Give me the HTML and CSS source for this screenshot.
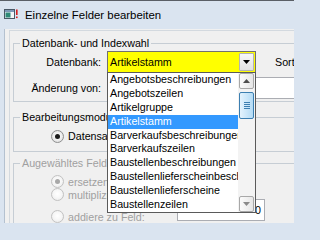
FILE: index.html
```html
<!DOCTYPE html>
<html lang="de">
<head>
<meta charset="utf-8">
<title>Einzelne Felder bearbeiten</title>
<link rel="stylesheet" href="styles.css">
</head>
<body>
<div class="win">
  <div class="titlebar">
    <svg class="appicon" width="14" height="11" viewBox="0 0 14 11">
      <rect x="0.5" y="0.5" width="10" height="9" fill="#f2f5f8" stroke="#4a5866"/>
      <rect x="1" y="1" width="9" height="2" fill="#7d98b6"/>
      <rect x="1.5" y="3.5" width="5" height="5" fill="#2f8a78"/>
      <rect x="12" y="0.5" width="1.6" height="5.5" fill="#d42020"/>
      <rect x="12" y="7.5" width="1.6" height="1.6" fill="#d42020"/>
    </svg>
    <span class="title">Einzelne Felder bearbeiten</span>
  </div>
  <div class="frame">
    <div class="client">
      <div class="panel">
        <fieldset class="grp g1">
          <legend>Datenbank- und Indexwahl</legend>
          <div class="frow">
            <span class="flabel">Datenbank:</span>
            <div class="combo">
              <span class="combo-text">Artikelstamm</span>
              <span class="combo-btn">
                <svg width="7" height="4" viewBox="0 0 7 4"><path d="M0 0H7L3.5 4Z" fill="#000"/></svg>
              </span>
              <div class="droplist">
                <ul class="items">
                  <li>Angebotsbeschreibungen</li>
                  <li>Angebotszeilen</li>
                  <li>Artikelgruppe</li>
                  <li class="sel">Artikelstamm</li>
                  <li>Barverkaufsbeschreibungen</li>
                  <li>Barverkaufszeilen</li>
                  <li>Baustellenbeschreibungen</li>
                  <li>Baustellenlieferscheinbeschreibungen</li>
                  <li>Baustellenlieferscheine</li>
                  <li>Baustellenzeilen</li>
                </ul>
                <div class="vscroll">
                  <span class="sbtn">
                    <svg width="7" height="4" viewBox="0 0 7 4"><path d="M0 4H7L3.5 0Z" fill="#4d4d4d"/></svg>
                  </span>
                  <span class="thumb"><span class="grip"></span></span>
                  <span class="track"></span>
                  <span class="sbtn">
                    <svg width="7" height="4" viewBox="0 0 7 4"><path d="M0 0H7L3.5 4Z" fill="#8a8a8a"/></svg>
                  </span>
                </div>
              </div>
            </div>
            <span class="sortlabel">Sortierung:</span>
          </div>
          <div class="frow r2">
            <span class="flabel">Änderung von:</span>
            <div class="textbox wide"></div>
          </div>
        </fieldset>

        <fieldset class="grp g2">
          <legend>Bearbeitungsmodus</legend>
          <div class="orow">
            <span class="opt"><span class="radio on"><span class="dot"></span></span>Datensatzweise</span>
            <span class="tail">bearbeiten:</span>
          </div>
        </fieldset>

        <fieldset class="grp g3 off">
          <legend>Augewähltes Feld</legend>
          <div class="orow">
            <span class="opt"><span class="radio on"><span class="dot"></span></span>ersetzen durch:</span>
          </div>
          <div class="orow">
            <span class="opt"><span class="radio"></span>multipliziere mit:</span>
          </div>
          <div class="orow tall">
            <span class="opt fixed"><span class="radio"></span>addiere zu Feld:</span>
            <div class="textbox num">0</div>
          </div>
        </fieldset>
      </div>
    </div>
  </div>
</div>
</body>
</html>
```
FILE: styles.css
```css
html, body {
  margin: 0;
  padding: 0;
}
body {
  width: 294px;
  height: 223px;
  overflow: hidden;
  background: #dae4f0;
  font-family: "Liberation Sans", Arial, sans-serif;
  font-size: 10.7px;
  color: #000;
}
.win {
  width: 294px;
  height: 223px;
  overflow: hidden;
  display: flex;
  flex-direction: column;
}
.titlebar {
  flex: none;
  height: 28px;
  border-top: 1px solid #5a5f66;
  display: flex;
  align-items: center;
  padding-left: 4px;
  background: #dae4f0;
}
.appicon {
  display: block;
  margin-right: 7px;
  margin-top: -1px;
}
.title {
  font-size: 11.4px;
  line-height: 14px;
}
.frame {
  flex: 1;
  padding-left: 4px;
  display: flex;
}
.client {
  flex: 1;
  background: #f0f0f0;
  border-left: 1px solid #b4c1d0;
  padding-left: 4px;
  padding-top: 1px;
}
.panel {
  width: 400px;
  height: 300px;
  border-top: 1px solid #d3d9df;
  border-left: 1px solid #d3d9df;
  padding-left: 3px;
  padding-top: 6px;
  box-sizing: border-box;
}
.grp {
  margin: 0;
  min-width: 0;
  border: 1px solid #c6cdd4;
  padding: 0;
}
.grp legend {
  margin-left: 6px;
  padding: 0 2px;
  line-height: 13px;
  height: 13px;
}
.g1 {
  padding: 1px 0 2px 0;
}
.g2 {
  margin-top: 9px;
  padding: 5px 0 8px 0;
}
.g3 {
  margin-top: 5px;
  padding: 5px 0 4px 0;
}
.g3.off {
  color: #a0a0a0;
}
.frow {
  display: flex;
  align-items: center;
  height: 22px;
}
.frow.r2 {
  margin-top: 4px;
}
.flabel {
  width: 87px;
  text-align: right;
  margin-right: 6px;
  white-space: nowrap;
}
.combo {
  position: relative;
  width: 149px;
  height: 22px;
  box-sizing: border-box;
  border: 1px solid #707070;
  background: #ffff00;
  display: flex;
  align-items: center;
}
.combo-text {
  flex: 1;
  padding-left: 2px;
  white-space: nowrap;
}
.combo-btn {
  width: 15px;
  height: 18px;
  margin: 1px;
  box-sizing: border-box;
  border: 1px solid #b3b3b3;
  border-radius: 1px;
  background: linear-gradient(#f8f8f8, #e2e2e2);
  display: flex;
  align-items: center;
  justify-content: center;
}
.combo-btn svg {
  display: block;
}
.droplist {
  position: absolute;
  z-index: 10;
  left: -1px;
  top: 20px;
  width: 149px;
  height: 141px;
  box-sizing: border-box;
  border: 1px solid #5a5a5a;
  background: #fff;
  display: flex;
}
.items {
  list-style: none;
  margin: 0;
  padding: 0;
  width: 130px;
  overflow: hidden;
}
.items li {
  height: 13.9px;
  line-height: 13.9px;
  padding-left: 2px;
  white-space: nowrap;
  overflow: hidden;
}
.items li.sel {
  background: #3399ff;
  color: #fff;
}
.vscroll {
  width: 17px;
  display: flex;
  flex-direction: column;
  background: #f3f3f3;
}
.sbtn {
  flex: none;
  width: 15px;
  height: 16px;
  margin: 0 0 1px 1px;
  box-sizing: border-box;
  border: 1px solid #a8a8a8;
  border-radius: 2px;
  background: linear-gradient(90deg, #fbfbfb, #e6e6e6);
  display: flex;
  align-items: center;
  justify-content: center;
}
.sbtn:last-child {
  margin: 1px 0 0 1px;
}
.sbtn svg {
  display: block;
}
.thumb {
  flex: none;
  width: 15px;
  height: 27px;
  margin: 2px 0 0 1px;
  box-sizing: border-box;
  border: 1px solid #3c7fb1;
  border-radius: 2px;
  background: linear-gradient(90deg, #e4f3fd, #b3dbf5);
  display: flex;
  align-items: center;
  justify-content: center;
}
.grip {
  width: 6px;
  height: 7px;
  background: repeating-linear-gradient(#3c7fb1 0 1px, transparent 1px 2px);
}
.track {
  flex: 1;
}
.sortlabel {
  margin-left: 19px;
  white-space: nowrap;
}
.textbox {
  height: 22px;
  box-sizing: border-box;
  border: 1px solid #abadb3;
  background: #fff;
}
.textbox.wide {
  width: 300px;
}
.textbox.num {
  width: 88px;
  text-align: right;
  padding-right: 3px;
  line-height: 20px;
  color: #000;
  align-self: flex-start;
  margin-top: -2px;
}
.orow {
  display: flex;
  align-items: center;
  height: 13px;
  padding-left: 37px;
  white-space: nowrap;
}
.g2 .orow {
  height: 14px;
}
.orow.tall {
  height: 22px;
}
.opt {
  display: flex;
  align-items: center;
}
.opt.fixed {
  width: 126px;
  align-self: flex-end;
}
.tail {
  margin-left: auto;
}
.g2 .opt {
  width: 194px;
}
.radio {
  width: 13px;
  height: 13px;
  box-sizing: border-box;
  border-radius: 50%;
  border: 1px solid #8e8f8f;
  background: radial-gradient(circle at 50% 45%, #ffffff 0, #f1f1f1 45%, #d4d4d4 100%);
  margin-right: 4px;
  display: flex;
  align-items: center;
  justify-content: center;
}
.radio .dot {
  width: 5px;
  height: 5px;
  border-radius: 50%;
  background: #1c1c1c;
}
.off .radio {
  border-color: #c2c2c2;
  background: radial-gradient(circle at 50% 45%, #ffffff 0, #f6f6f6 50%, #e6e6e6 100%);
}
.off .radio .dot {
  background: #a8a8a8;
}
```
